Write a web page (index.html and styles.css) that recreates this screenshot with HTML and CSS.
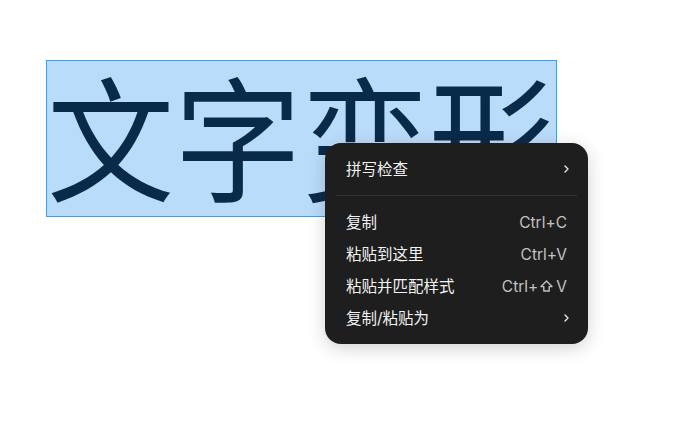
FILE: index.html
```html
<!DOCTYPE html>
<html lang="zh-CN">
<head>
  <meta charset="UTF-8" />
  <meta name="viewport" content="width=device-width, initial-scale=1.0"/>
  <title>文字变形</title>
  <link rel="stylesheet" href="styles.css">
</head>
<body>
  <div class="canvas">
    <div class="selection"><span class="word">文字变形</span></div>

    <div class="context-menu">
      <div class="menu-item">
        <span class="label">拼写检查</span>
        <svg class="chevron" width="5" height="8" viewBox="0 0 5 8"><path d="M1 1 L4 4 L1 7" fill="none" stroke="currentColor" stroke-width="1.4" stroke-linecap="round" stroke-linejoin="round"/></svg>
      </div>
      <div class="separator"></div>
      <div class="menu-item">
        <span class="label">复制</span>
        <span class="shortcut">Ctrl+C</span>
      </div>
      <div class="menu-item">
        <span class="label">粘贴到这里</span>
        <span class="shortcut">Ctrl+V</span>
      </div>
      <div class="menu-item">
        <span class="label">粘贴并匹配样式</span>
        <span class="shortcut">Ctrl+<svg class="shift" width="13" height="12" viewBox="0 0 13 12"><path d="M6.5 1 L12 6.6 H9.2 V11 H3.8 V6.6 H1 Z" fill="none" stroke="currentColor" stroke-width="1.4" stroke-linejoin="round"/></svg>V</span>
      </div>
      <div class="menu-item">
        <span class="label">复制/粘贴为</span>
        <svg class="chevron" width="5" height="8" viewBox="0 0 5 8"><path d="M1 1 L4 4 L1 7" fill="none" stroke="currentColor" stroke-width="1.4" stroke-linecap="round" stroke-linejoin="round"/></svg>
      </div>
    </div>
  </div>
</body>
</html>
```

FILE: styles.css
```css
body {
  margin: 0;
  background: #ffffff;
  font-family: Inter, "Noto Sans CJK SC", sans-serif;
}
.canvas {
  position: relative;
  width: 680px;
  height: 424px;
  padding: 60px 0 0 46px;
  box-sizing: border-box;
}
.selection {
  width: 509px;
  height: 155px;
  border: 1px solid #35a2f4;
  background: #badcfb;
  overflow: hidden;
}
.word {
  display: block;
  font-family: "Noto Sans CJK SC", sans-serif;
  font-size: 135px;
  line-height: 144px;
  color: #0a2a4b;
  white-space: nowrap;
  transform: scaleX(0.943);
  transform-origin: left top;
}
.context-menu {
  position: absolute;
  left: 325px;
  top: 143px;
  width: 263px;
  padding: 10px 0;
  background: #1e1e1e;
  border-radius: 16px;
  box-shadow: 0 4px 18px rgba(0,0,0,0.18);
}
.menu-item {
  display: flex;
  justify-content: space-between;
  align-items: center;
  height: 32px;
  padding: 0 21px;
  font-size: 15.5px;
  color: #f2f2f2;
}
.label {
  margin-top: -2px;
}
.shortcut {
  display: flex;
  align-items: center;
  color: #c2c2c2;
}
.shift {
  margin: 0 3px 0 2px;
}
.chevron {
  color: #e6e6e6;
  margin-right: -2px;
}
.separator {
  height: 1px;
  background: #333333;
  margin: 10px 11px;
}
```
